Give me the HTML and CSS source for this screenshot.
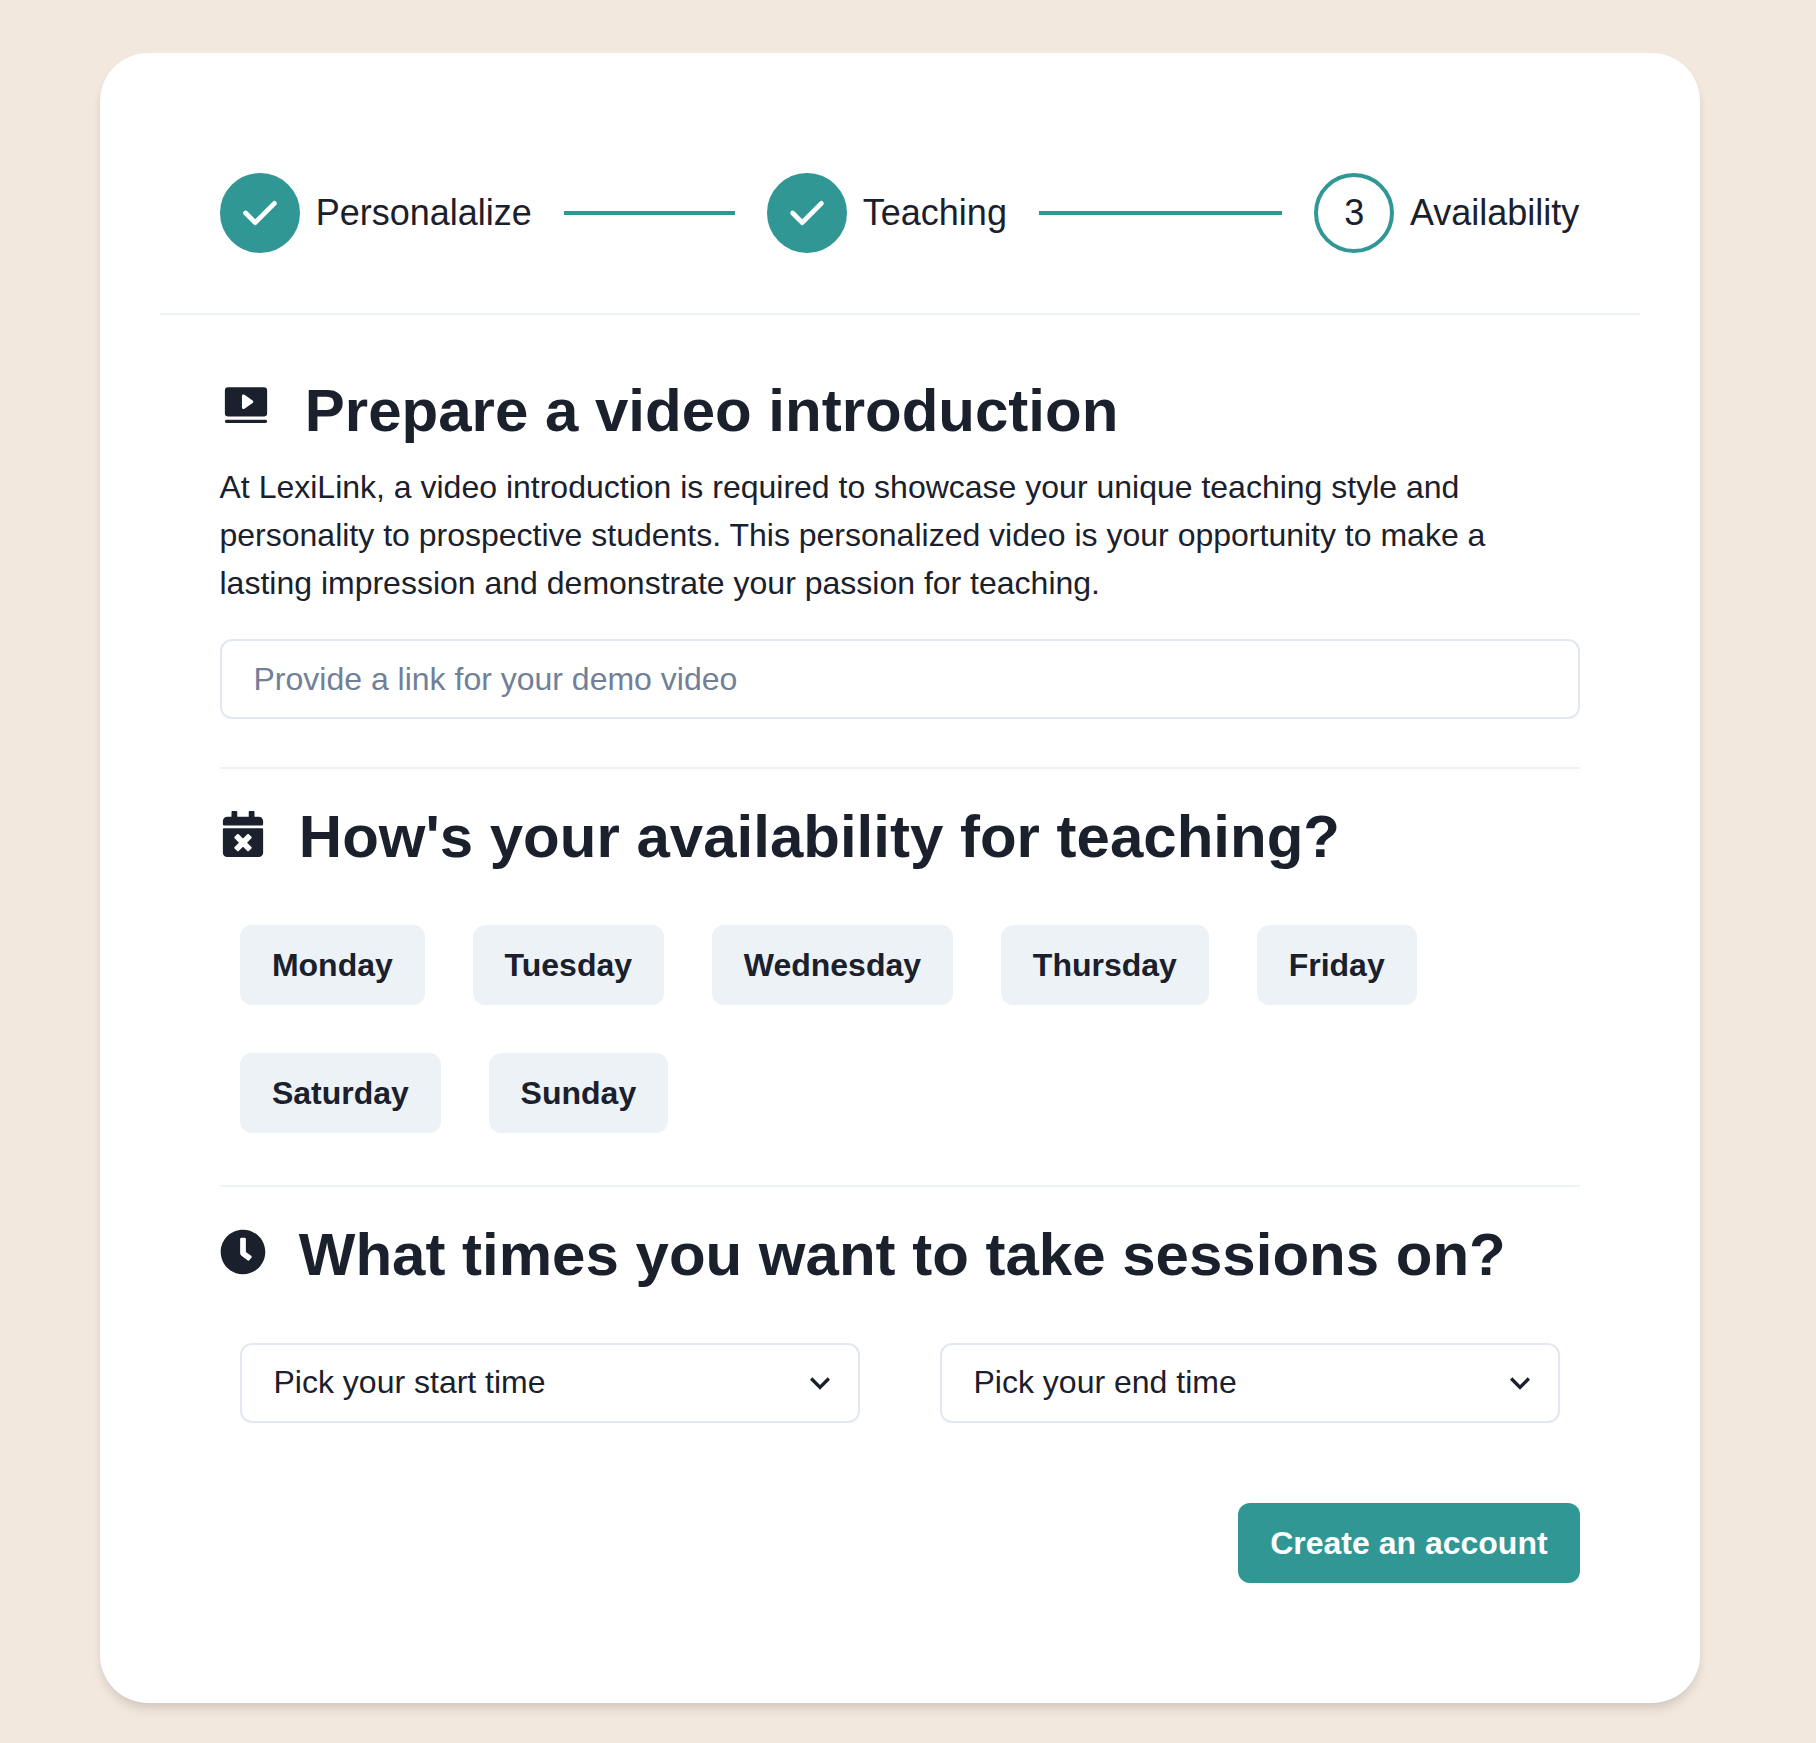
FILE: index.html
```html
<!DOCTYPE html>
<html lang="en">
<head>
<meta charset="utf-8">
<title>LexiLink – Availability</title>
<link rel="stylesheet" href="styles.css">
</head>
<body>
<main class="card">
  <div class="stepper">
    <div class="step">
      <span class="step-dot done"><svg class="check" viewBox="0 0 20 20"><path fill-rule="evenodd" d="M16.707 5.293a1 1 0 010 1.414l-8 8a1 1 0 01-1.414 0l-4-4a1 1 0 011.414-1.414L8 12.586l7.293-7.293a1 1 0 011.414 0z"/></svg></span>
      <span class="step-label">Personalalize</span>
      <span class="step-line"></span>
    </div>
    <div class="step">
      <span class="step-dot done"><svg class="check" viewBox="0 0 20 20"><path fill-rule="evenodd" d="M16.707 5.293a1 1 0 010 1.414l-8 8a1 1 0 01-1.414 0l-4-4a1 1 0 011.414-1.414L8 12.586l7.293-7.293a1 1 0 011.414 0z"/></svg></span>
      <span class="step-label">Teaching</span>
      <span class="step-line"></span>
    </div>
    <div class="step last">
      <span class="step-dot">3</span>
      <span class="step-label">Availability</span>
    </div>
  </div>

  <hr class="divider">

  <form class="content">
    <section class="intro">
      <h2 class="heading"><svg class="icon icon-video" viewBox="0 0 256 256"><path d="M232,208a8,8,0,0,1-8,8H32a8,8,0,0,1,0-16H224A8,8,0,0,1,232,208Zm0-152V168a16,16,0,0,1-16,16H40a16,16,0,0,1-16-16V56A16,16,0,0,1,40,40H216A16,16,0,0,1,232,56Zm-68,56a8,8,0,0,0-3.41-6.55l-40-28A8,8,0,0,0,108,84v56a8,8,0,0,0,12.59,6.55l40-28A8,8,0,0,0,164,112Z"/></svg>Prepare a video introduction</h2>
      <p class="text">At LexiLink, a video introduction is required to showcase your unique teaching style and personality to prospective students. This personalized video is your opportunity to make a lasting impression and demonstrate your passion for teaching.</p>
      <input class="field" type="text" placeholder="Provide a link for your demo video">
    </section>

    <hr class="divider">

    <section class="block">
      <h2 class="heading"><svg class="icon" viewBox="0 0 448 512"><path d="M436 160H12c-6.6 0-12-5.4-12-12v-36c0-26.5 21.5-48 48-48h48V12c0-6.6 5.4-12 12-12h40c6.6 0 12 5.4 12 12v52h128V12c0-6.6 5.4-12 12-12h40c6.6 0 12 5.4 12 12v52h48c26.5 0 48 21.5 48 48v36c0 6.6-5.4 12-12 12zM12 192h424c6.6 0 12 5.4 12 12v260c0 26.5-21.5 48-48 48H48c-26.5 0-48-21.5-48-48V204c0-6.6 5.4-12 12-12zm257.3 160l48.1-48.1c4.7-4.7 4.7-12.3 0-17l-28.3-28.3c-4.7-4.7-12.3-4.7-17 0L224 306.7l-48.1-48.1c-4.7-4.7-12.3-4.7-17 0l-28.3 28.3c-4.7 4.7-4.7 12.3 0 17l48.1 48.1-48.1 48.1c-4.7 4.7-4.7 12.3 0 17l28.3 28.3c4.7 4.7 12.3 4.7 17 0l48.1-48.1 48.1 48.1c4.7 4.7 12.3 4.7 17 0l28.3-28.3c4.7-4.7 4.7-12.3 0-17L269.3 352z"/></svg>How's your availability for teaching?</h2>
      <div class="days">
        <button class="btn" type="button">Monday</button>
        <button class="btn" type="button">Tuesday</button>
        <button class="btn" type="button">Wednesday</button>
        <button class="btn" type="button">Thursday</button>
        <button class="btn" type="button">Friday</button>
        <button class="btn" type="button">Saturday</button>
        <button class="btn" type="button">Sunday</button>
      </div>
    </section>

    <hr class="divider">

    <section class="block">
      <h2 class="heading"><svg class="icon" viewBox="0 0 512 512"><path d="M256,8C119,8,8,119,8,256S119,504,256,504,504,393,504,256,393,8,256,8Zm92.49,313h0l-20,25a16,16,0,0,1-22.49,2.5h0l-67-49.72a40,40,0,0,1-15-31.23V112a16,16,0,0,1,16-16h32a16,16,0,0,1,16,16V256l58,42.5A16,16,0,0,1,348.49,321Z"/></svg>What times you want to take sessions on?</h2>
      <div class="times">
        <div class="select"><span class="select-value">Pick your start time</span><svg class="chevron" viewBox="0 0 24 24"><path d="M16.59 8.59L12 13.17 7.41 8.59 6 10l6 6 6-6z"/></svg></div>
        <div class="select"><span class="select-value">Pick your end time</span><svg class="chevron" viewBox="0 0 24 24"><path d="M16.59 8.59L12 13.17 7.41 8.59 6 10l6 6 6-6z"/></svg></div>
      </div>
    </section>

    <div class="actions">
      <button class="btn primary" type="button">Create an account</button>
    </div>
  </form>
</main>
</body>
</html>
```

FILE: styles.css
```css
* {
  box-sizing: border-box;
  margin: 0;
  padding: 0;
}

body {
  min-height: 1743px;
  padding: 53px 116px 40px 100px;
  background: #f2e8de;
  color: #1a202c;
  font: 32px/48px "Liberation Sans", Arial, sans-serif;
}

.card {
  width: 1600px;
  height: 1650px;
  padding: 120px 60px;
  background: #fff;
  border-radius: 48px;
  box-shadow: 0 8px 12px -2px rgba(0, 0, 0, 0.1), 0 4px 8px -2px rgba(0, 0, 0, 0.06);
}

.stepper {
  display: flex;
  gap: 32px;
  padding: 0 60px 60px;
}

.step {
  display: flex;
  flex: 1 1 0;
  align-items: center;
  gap: 16px;
  font-size: 36px;
  line-height: 54px;
}

.step-label {
  margin-left: -0.3px;
}

.step.last {
  flex: none;
  padding-right: 0.7px;
}

.step-dot {
  display: flex;
  flex: none;
  align-items: center;
  justify-content: center;
  width: 80px;
  height: 80px;
  border: 4px solid #319795;
  border-radius: 50%;
}

.step-dot.done {
  background: #319795;
}

.check {
  width: 48px;
  height: 48px;
  fill: #fff;
}

.step-line {
  flex: 1;
  height: 4px;
  margin-left: 16px;
  background: #319795;
}

.divider {
  height: 2px;
  border: 0;
  background: #edf2f7;
}

.content {
  padding: 60px 60px 0;
}

.intro {
  display: flex;
  flex-direction: column;
  padding-bottom: 48px;
}

.heading {
  font-size: 60px;
  line-height: 72px;
  font-weight: 700;
  white-space: nowrap;
}

.icon {
  width: 46px;
  height: 46px;
  margin-right: 32.8px;
  fill: currentColor;
}

.icon-video {
  width: 52px;
  height: 52px;
}

.text {
  margin: 16px 0 32px -0.5px;
}

.field,
.select {
  height: 80px;
  border: 2px solid #e2e8f0;
  border-radius: 12px;
  background: #fff;
  color: inherit;
}

.field {
  padding: 0 31.5px;
  font: inherit;
}

.field::placeholder {
  color: #718096;
}

.block {
  padding-top: 32px;
}

.days {
  display: flex;
  flex-wrap: wrap;
  gap: 48px;
  padding: 52px 20px;
}

.btn {
  height: 80px;
  padding: 0 31.9px;
  border: 0;
  border-radius: 12px;
  background: #edf2f7;
  color: inherit;
  font: inherit;
  font-weight: 700;
}

.times {
  display: grid;
  grid-template-columns: 1fr 1fr;
  gap: 80px;
  padding: 52px 20px 80px;
}

.select {
  display: flex;
  align-items: center;
  justify-content: space-between;
  padding: 0 18px 0 31.5px;
}

.select-value {
  padding-bottom: 2px;
}

.chevron {
  width: 40px;
  height: 40px;
  fill: currentColor;
}

.actions {
  display: flex;
  justify-content: flex-end;
}

.btn.primary {
  padding: 0 32.4px;
  background: #319795;
  color: #fff;
}
```
